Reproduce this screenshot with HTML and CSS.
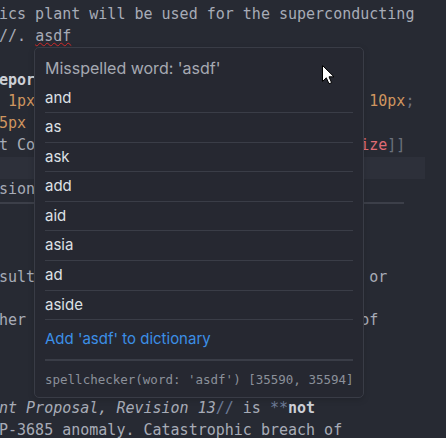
FILE: index.html
```html
<!DOCTYPE html>
<html>
<head>
<meta charset="utf-8">
<link rel="stylesheet" href="styles.css">
</head>
<body>
<div class="editor">
  <div class="line">, while this mostly goes up the steam pressure</div>
  <div class="line">ics plant will be used for the superconducting</div>
  <div class="line">//. <span class="misspelled">asdf</span></div>
  <div class="line"> </div>
  <div class="line"><span class="strong">epor</span></div>
  <div class="line"> <span class="num">1px</span>                                     <span class="num">10px</span><span class="punct">;</span></div>
  <div class="line"><span class="num">5px</span></div>
  <div class="line">t Co                                    <span class="link">ize</span><span class="bracket">]]</span></div>
  <div class="line active"> </div>
  <div class="line">sion</div>
  <div class="line hr-line"><div class="hr"></div></div>
  <div class="line"> </div>
  <div class="line"> </div>
  <div class="line">sult                                     or</div>
  <div class="line"> </div>
  <div class="line">her                                     of</div>
  <div class="line"> </div>
  <div class="line"> </div>
  <div class="line"> </div>
  <div class="line"><span class="em">nt Proposal, Revision 13</span><span class="mark">//</span> is <span class="mark">**</span><span class="strong">not</span></div>
  <div class="line">P-3685 anomaly. Catastrophic breach of</div>
</div>

<div class="popup">
  <div class="popup-title">Misspelled word: 'asdf'</div>
  <ul class="suggestions">
    <li>and</li>
    <li>as</li>
    <li>ask</li>
    <li>add</li>
    <li>aid</li>
    <li>asia</li>
    <li>ad</li>
    <li>aside</li>
  </ul>
  <div class="add-word">Add 'asdf' to dictionary</div>
  <div class="popup-footer">spellchecker(word: 'asdf') [35590, 35594]</div>
</div>

<svg class="cursor" width="13" height="20" viewBox="0 0 13 20">
  <path d="M0.5 0.5 L0.5 16.5 L4.3 12.8 L7 18.8 L9.6 17.7 L7 11.8 L12 11.8 Z" fill="#ffffff" stroke="#000000" stroke-width="1" stroke-linejoin="miter"/>
</svg>
</body>
</html>
```

FILE: styles.css
```css
html, body {
  margin: 0;
  padding: 0;
  background: #272a33;
  overflow: hidden;
  width: 446px;
  height: 438px;
}

.editor {
  margin-top: -18px;
  margin-left: -1px;
  font-family: "DejaVu Sans Mono", monospace;
  font-size: 15px;
  color: #a7acb7;
}

.line {
  height: 21.9px;
  line-height: 21.9px;
  white-space: pre;
}

.line.active {
  width: 426px;
  background: #2d303a;
}

.hr-line {
  display: flex;
  flex-direction: column;
}

.hr {
  width: 405px;
  height: 2px;
  margin-top: 1px;
  background: #3c3f49;
}

.strong {
  font-weight: bold;
  color: #cdd0d6;
}

.num {
  color: #cf955f;
}

.punct {
  color: #6f7480;
}

.link {
  color: #e06c75;
}

.bracket {
  color: #6c717c;
}

.em {
  font-style: italic;
}

.mark {
  color: #6e7c98;
}

.misspelled {
  text-decoration: underline wavy #d42a2a;
  text-decoration-thickness: 1px;
  text-underline-offset: 1px;
}

.popup {
  position: absolute;
  left: 34px;
  top: 47px;
  width: 330px;
  box-sizing: border-box;
  background: #262831;
  border: 1px solid #393c46;
  border-radius: 5px;
  padding: 0 10px;
  font-family: Inter, "Noto Sans", sans-serif;
  font-size: 15px;
  box-shadow: 0 2px 6px rgba(0, 0, 0, 0.15);
}

.popup-title {
  padding: 10px 0 5.5px;
  line-height: 20px;
  font-size: 16px;
  color: #a6aab3;
}

.suggestions {
  list-style: none;
  margin: 0;
  padding: 0;
}

.suggestions li {
  height: 28.6px;
  line-height: 28.6px;
  border-bottom: 1px solid #3a3d47;
  color: #dde0e5;
}

.add-word {
  padding: 5px 0 5px;
  line-height: 28.6px;
  color: #3c8fe6;
  border-bottom: 2px solid #3a3d47;
}

.popup-footer {
  padding: 9px 0 7px;
  line-height: 20px;
  font-family: "DejaVu Sans Mono", monospace;
  font-size: 12.5px;
  color: #8b909a;
  white-space: pre;
}

.cursor {
  position: absolute;
  left: 322px;
  top: 65px;
}
```
